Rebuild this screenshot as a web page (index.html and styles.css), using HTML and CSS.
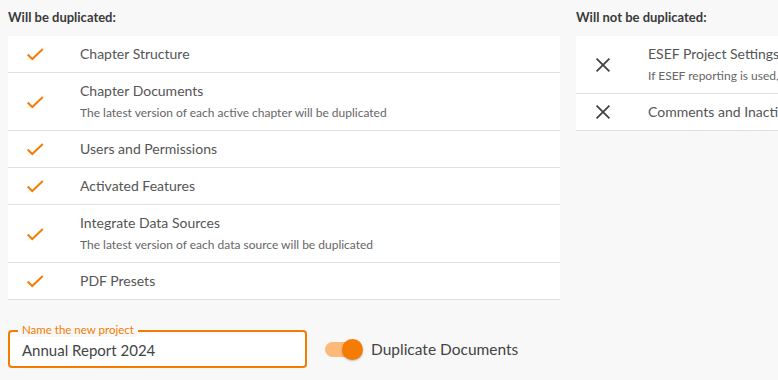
FILE: index.html
```html
<!DOCTYPE html>
<html lang="en">
<head>
    <meta charset="UTF-8">
    <meta name="viewport" content="width=device-width, initial-scale=1.0">
    <title>Duplicate Project</title>
    <link rel="stylesheet" href="styles.css">
</head>
<body>
    <div class="dialog">
        <div class="columns">
            <div class="column">
                <h3 class="column-title">Will be duplicated:</h3>
                <div class="list">
                    <div class="item">
                        <span class="icon check"><svg viewBox="0 0 24 24"><path d="M4 12.5l5 5L20.5 6.5"/></svg></span>
                        <div class="item-text"><div class="item-name">Chapter Structure</div></div>
                    </div>
                    <div class="item">
                        <span class="icon check"><svg viewBox="0 0 24 24"><path d="M4 12.5l5 5L20.5 6.5"/></svg></span>
                        <div class="item-text">
                            <div class="item-name">Chapter Documents</div>
                            <div class="item-desc">The latest version of each active chapter will be duplicated</div>
                        </div>
                    </div>
                    <div class="item">
                        <span class="icon check"><svg viewBox="0 0 24 24"><path d="M4 12.5l5 5L20.5 6.5"/></svg></span>
                        <div class="item-text"><div class="item-name">Users and Permissions</div></div>
                    </div>
                    <div class="item">
                        <span class="icon check"><svg viewBox="0 0 24 24"><path d="M4 12.5l5 5L20.5 6.5"/></svg></span>
                        <div class="item-text"><div class="item-name">Activated Features</div></div>
                    </div>
                    <div class="item">
                        <span class="icon check"><svg viewBox="0 0 24 24"><path d="M4 12.5l5 5L20.5 6.5"/></svg></span>
                        <div class="item-text">
                            <div class="item-name">Integrate Data Sources</div>
                            <div class="item-desc">The latest version of each data source will be duplicated</div>
                        </div>
                    </div>
                    <div class="item">
                        <span class="icon check"><svg viewBox="0 0 24 24"><path d="M4 12.5l5 5L20.5 6.5"/></svg></span>
                        <div class="item-text"><div class="item-name">PDF Presets</div></div>
                    </div>
                </div>
            </div>

            <div class="column">
                <h3 class="column-title">Will not be duplicated:</h3>
                <div class="list">
                    <div class="item">
                        <span class="icon cross"><svg viewBox="0 0 24 24"><path d="M5 5l14 14M19 5L5 19"/></svg></span>
                        <div class="item-text">
                            <div class="item-name">ESEF Project Settings</div>
                            <div class="item-desc">If ESEF reporting is used, the settings have to be configured again</div>
                        </div>
                    </div>
                    <div class="item">
                        <span class="icon cross"><svg viewBox="0 0 24 24"><path d="M5 5l14 14M19 5L5 19"/></svg></span>
                        <div class="item-text"><div class="item-name">Comments and Inactive Chapters</div></div>
                    </div>
                </div>
            </div>
        </div>

        <div class="form-row">
            <label class="field">
                <span class="field-label">Name the new project</span>
                <input class="field-input" type="text" value="Annual Report 2024">
            </label>
            <div class="toggle">
                <span class="toggle-track"><span class="toggle-thumb"></span></span>
                <span class="toggle-label">Duplicate Documents</span>
            </div>
        </div>
    </div>
</body>
</html>
```

FILE: styles.css
```css
* {
    margin: 0;
    padding: 0;
    box-sizing: border-box;
}

body {
    font-family: Lato, 'Open Sans', sans-serif;
    background: #f8f8f8;
    color: #555;
    overflow: hidden;
}

.dialog {
    width: 1128px;
    padding: 0 8px;
}

.columns {
    display: flex;
    gap: 16px;
}

.column {
    width: 552px;
    flex-shrink: 0;
}

.column-title {
    font-size: 13px;
    font-weight: 700;
    color: #3a3a3a;
    height: 36px;
    padding-top: 9px;
}

.list {
    background: #fff;
}

.item {
    display: flex;
    align-items: center;
    min-height: 37px;
    border-bottom: 1px solid #e0e0e0;
}

.item-text {
    padding: 10px 0;
}

.icon {
    width: 72px;
    display: flex;
    padding-left: 16px;
    flex-shrink: 0;
}

.icon svg {
    width: 22px;
    height: 22px;
    fill: none;
    stroke-width: 2.1;
}

.check svg {
    stroke: #f57c00;
}

.cross svg {
    stroke: #444;
    stroke-width: 2;
}

.item-name {
    font-size: 14px;
    line-height: 16px;
    color: #555;
}

.item-desc {
    font-size: 12px;
    line-height: 14px;
    margin-top: 7px;
    color: #666;
    white-space: nowrap;
}

.form-row {
    display: flex;
    align-items: center;
    gap: 18px;
    margin-top: 30px;
}

.field {
    position: relative;
    width: 299px;
    height: 38px;
    border: 2px solid #f57c00;
    border-radius: 4px;
    background: #fff;
    display: flex;
    align-items: center;
}

.field-label {
    position: absolute;
    top: -9px;
    left: 8px;
    padding: 0 4px;
    background: #f8f8f8;
    color: #f57c00;
    font-size: 11.5px;
    line-height: 14px;
}

.field-input {
    border: none;
    outline: none;
    background: transparent;
    font-family: inherit;
    font-size: 15px;
    color: #444;
    padding: 2px 12px 0;
    width: 100%;
}

.toggle {
    display: flex;
    align-items: center;
    gap: 10px;
}

.toggle-track {
    position: relative;
    display: block;
    width: 36px;
    height: 15px;
    border-radius: 8px;
    background: #fcb97a;
}

.toggle-thumb {
    position: absolute;
    top: -3px;
    right: -2px;
    width: 21px;
    height: 21px;
    border-radius: 50%;
    background: #f57c00;
    box-shadow: 0 1px 2px rgba(0, 0, 0, 0.25);
}

.toggle-label {
    font-size: 15.5px;
    color: #444;
}
```
